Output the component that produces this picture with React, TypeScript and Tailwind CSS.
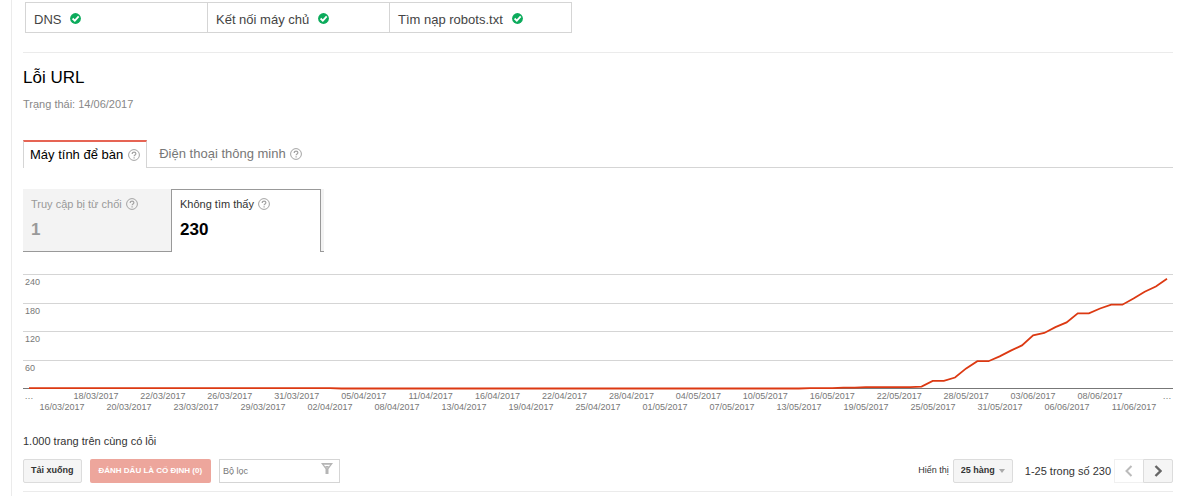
import { useState } from "react";

const checks = ["DNS", "Kết nối máy chủ", "Tìm nạp robots.txt"];

const topDates = [
  "…", "18/03/2017", "22/03/2017", "26/03/2017", "31/03/2017", "05/04/2017",
  "11/04/2017", "16/04/2017", "22/04/2017", "28/04/2017", "04/05/2017", "10/05/2017",
  "16/05/2017", "22/05/2017", "28/05/2017", "03/06/2017", "08/06/2017", "…",
];

const bottomDates = [
  "16/03/2017", "20/03/2017", "23/03/2017", "29/03/2017", "02/04/2017", "08/04/2017",
  "13/04/2017", "19/04/2017", "25/04/2017", "01/05/2017", "07/05/2017", "13/05/2017",
  "19/05/2017", "25/05/2017", "31/05/2017", "06/06/2017", "11/06/2017",
];

const MAX = 240;

// one value per crawl day
const errors: number[] = [
  ...Array(28).fill(2),
  ...Array(42).fill(1),
  2, 2, 2, 3, 3, 4, 4, 4, 4, 4,
  5, 17, 17, 24, 43, 58, 58, 68, 80, 91, 112, 117, 129, 139, 158, 158, 168, 176, 176, 189, 203, 214, 230,
];

function CheckIcon() {
  return (
    <svg viewBox="0 0 11 11" className="mt-px h-[11px] w-[11px]" aria-hidden="true">
      <circle cx="5.5" cy="5.5" r="5.4" fill="#0cab5c" />
      <path d="M2.6 5.5l2.2 2.1 3.9-4.2" fill="none" stroke="#fff" strokeWidth="1.8" />
    </svg>
  );
}

function HelpIcon() {
  return (
    <svg viewBox="0 0 12 12" className="h-3 w-3 shrink-0" fill="none" stroke="#a3a3a3" aria-hidden="true">
      <circle cx="6" cy="6" r="5.4" />
      <path d="M4.2 4.9c0-2.5 3.7-2.3 3.7-.2C7.9 5.9 6.1 6 6.1 7.3" strokeWidth="1.2" />
      <path d="M6.1 8.2v1.2" strokeWidth="1.2" />
    </svg>
  );
}

function DateRow({ dates }: { dates: string[] }) {
  return (
    <div className="flex justify-between">
      {dates.map((date, i) => (
        <span key={i} className="flex w-0 justify-center whitespace-nowrap">{date}</span>
      ))}
    </div>
  );
}

function ErrorChart() {
  const points = errors.map((v, i) => `${i},${MAX - v}`).join(" ");

  return (
    <div className="mt-[22px] text-[9px] leading-[11px] text-[#777]">
      <div className="relative h-[115px]">
        <div className="flex h-full flex-col border-b border-[#777]">
          {[240, 180, 120, 60].map((tick) => (
            <div key={tick} className="flex-1 border-t border-[#d5d5d5] pl-[2px] pt-[2px]">{tick}</div>
          ))}
        </div>
        <div className="absolute inset-x-[6px] inset-y-0">
          <svg
            viewBox={`0 0 ${errors.length - 1} ${MAX}`}
            preserveAspectRatio="none"
            className="h-full w-full overflow-visible"
          >
            <polyline points={points} fill="none" stroke="#dc3912" strokeWidth="1.8" vectorEffect="non-scaling-stroke" />
          </svg>
        </div>
      </div>
      <div className="mx-[6px] pt-[2px]">
        <DateRow dates={topDates} />
      </div>
      <div className="mx-[39px]">
        <DateRow dates={bottomDates} />
      </div>
    </div>
  );
}

export default function App() {
  const [device, setDevice] = useState("desktop");
  const [kind, setKind] = useState("notFound");
  const [filter, setFilter] = useState("");

  const deviceTab = (active: boolean) =>
    active
      ? "-mb-px flex h-7 items-center gap-[5px] border-x border-t-2 border-x-[#d5d5d5] border-t-[#e66454] bg-white px-[6px] text-black"
      : "flex h-[27px] items-center gap-1 px-3 text-[#777]";

  const kindTab = (active: boolean) =>
    active
      ? "w-[150px] border-x border-t border-[#999] bg-white px-2 pt-[7px] text-left text-[#333]"
      : "w-[148px] border-b border-b-[#999] bg-[#f3f3f3] px-2 pt-2 text-left text-[#999]";

  return (
    <div className="min-h-screen bg-white font-['Liberation_Sans',Arial,sans-serif] text-[11px] text-[#333]">
      <main className="ml-[11px] min-h-screen border-l border-[#ebebeb] pl-[11px] pr-[27px] pt-[2px]">
        <table className="ml-[2px] border-collapse text-[13px] leading-4 text-[#444]">
          <tbody>
            <tr>
              {checks.map((name) => (
                <td key={name} className="h-[30px] w-[182px] border border-[#d5d5d5] px-2 pt-[5px]">
                  <span className="flex items-start gap-[9px]">
                    {name}
                    <CheckIcon />
                  </span>
                </td>
              ))}
            </tr>
          </tbody>
        </table>

        <section className="mt-[19px] border-t border-[#ebebeb] pt-[15px]">
          <h1 className="text-[17px] leading-5 text-black">Lỗi URL</h1>
          <p className="mt-[9px] leading-[14px] text-[#888]">Trạng thái: 14/06/2017</p>

          <div role="tablist" className="mt-[29px] flex items-start border-b border-[#d5d5d5] text-[13px]">
            <button role="tab" aria-selected={device === "desktop"} onClick={() => setDevice("desktop")} className={deviceTab(device === "desktop")}>
              Máy tính để bàn
              <HelpIcon />
            </button>
            <button role="tab" aria-selected={device === "phone"} onClick={() => setDevice("phone")} className={deviceTab(device === "phone")}>
              Điện thoại thông minh
              <HelpIcon />
            </button>
          </div>

          <div role="tablist" className="mt-[21px] flex h-[63px] items-stretch">
            <button role="tab" aria-selected={kind === "denied"} onClick={() => setKind("denied")} className={kindTab(kind === "denied")}>
              <span className="flex h-full flex-col">
                <span className="flex items-center gap-1 leading-[14px]">Truy cập bị từ chối <HelpIcon /></span>
                <span className="mt-[9px] text-[17px] font-bold leading-5">1</span>
              </span>
            </button>
            <button role="tab" aria-selected={kind === "notFound"} onClick={() => setKind("notFound")} className={kindTab(kind === "notFound")}>
              <span className="flex h-full flex-col">
                <span className="flex items-center gap-1 leading-[14px]">Không tìm thấy <HelpIcon /></span>
                <span className="mt-[9px] text-[17px] font-bold leading-5 text-black">230</span>
              </span>
            </button>
            <span className="w-[3px] border-b border-[#999] bg-[#f3f3f3]" />
          </div>

          <ErrorChart />
        </section>

        <p className="mt-[21px] leading-[14px]">1.000 trang trên cùng có lỗi</p>

        <div className="mt-[11px] flex items-center pb-2 text-[9px]">
          <button className="h-6 rounded-[2px] border border-[#dcdcdc] bg-[#f5f5f5] px-[7px] font-bold text-[#333]">Tải xuống</button>
          <button className="ml-2 h-6 rounded-[2px] bg-[#eda69c] px-[9px] text-[8px] font-bold text-white" disabled>ĐÁNH DẤU LÀ CỐ ĐỊNH (0)</button>
          <div className="relative ml-2">
            <input
              aria-label="Bộ lọc"
              placeholder="Bộ lọc"
              value={filter}
              onChange={(e) => setFilter(e.target.value)}
              className="block h-6 w-[121px] border border-[#d5d5d5] pl-[3px] pr-6 outline-none placeholder:text-[#777]"
            />
            <svg viewBox="0 0 12 12" className="pointer-events-none absolute right-[7px] top-1 h-3 w-3" aria-hidden="true">
              <path d="M0 0h12L7.5 6v5h-3V6z" fill="#b5b5b5" />
              <path d="M2.8 1.8h6.4L6 5.6z" fill="#fff" />
              <path d="M4 3h4L6 5.6z" fill="#b5b5b5" />
            </svg>
          </div>

          <label htmlFor="rows" className="ml-auto">Hiển thị</label>
          <div className="relative ml-1">
            <select id="rows" defaultValue="25" className="block h-6 w-[60px] appearance-none rounded-[2px] border border-[#dcdcdc] bg-[#f5f5f5] pl-[7px] font-bold text-[#333]">
              <option value="25">25 hàng</option>
              <option value="50">50 hàng</option>
              <option value="100">100 hàng</option>
            </select>
            <span className="pointer-events-none absolute right-2 top-[10px] border-x-[3px] border-t-4 border-x-transparent border-t-[#aaa]" />
          </div>
          <span className="ml-3 text-[11px]">1-25 trong số 230</span>
          <button aria-label="Trang trước" disabled className="ml-[3px] flex h-6 w-[29px] items-center justify-center border border-r-0 border-[#f0f0f0] text-[#bbb]">
            <svg viewBox="0 0 8 12" className="h-3 w-2" fill="none" stroke="currentColor" strokeWidth="2">
              <path d="M6.5 1L1.5 6l5 5" />
            </svg>
          </button>
          <button aria-label="Trang sau" className="flex h-6 w-[30px] items-center justify-center rounded-r-[2px] border border-[#dcdcdc] bg-[#f5f5f5] text-[#666]">
            <svg viewBox="0 0 8 12" className="h-3 w-2" fill="none" stroke="currentColor" strokeWidth="2.4">
              <path d="M1.5 1l5 5-5 5" />
            </svg>
          </button>
        </div>
        <hr className="border-[#ebebeb]" />
      </main>
    </div>
  );
}
